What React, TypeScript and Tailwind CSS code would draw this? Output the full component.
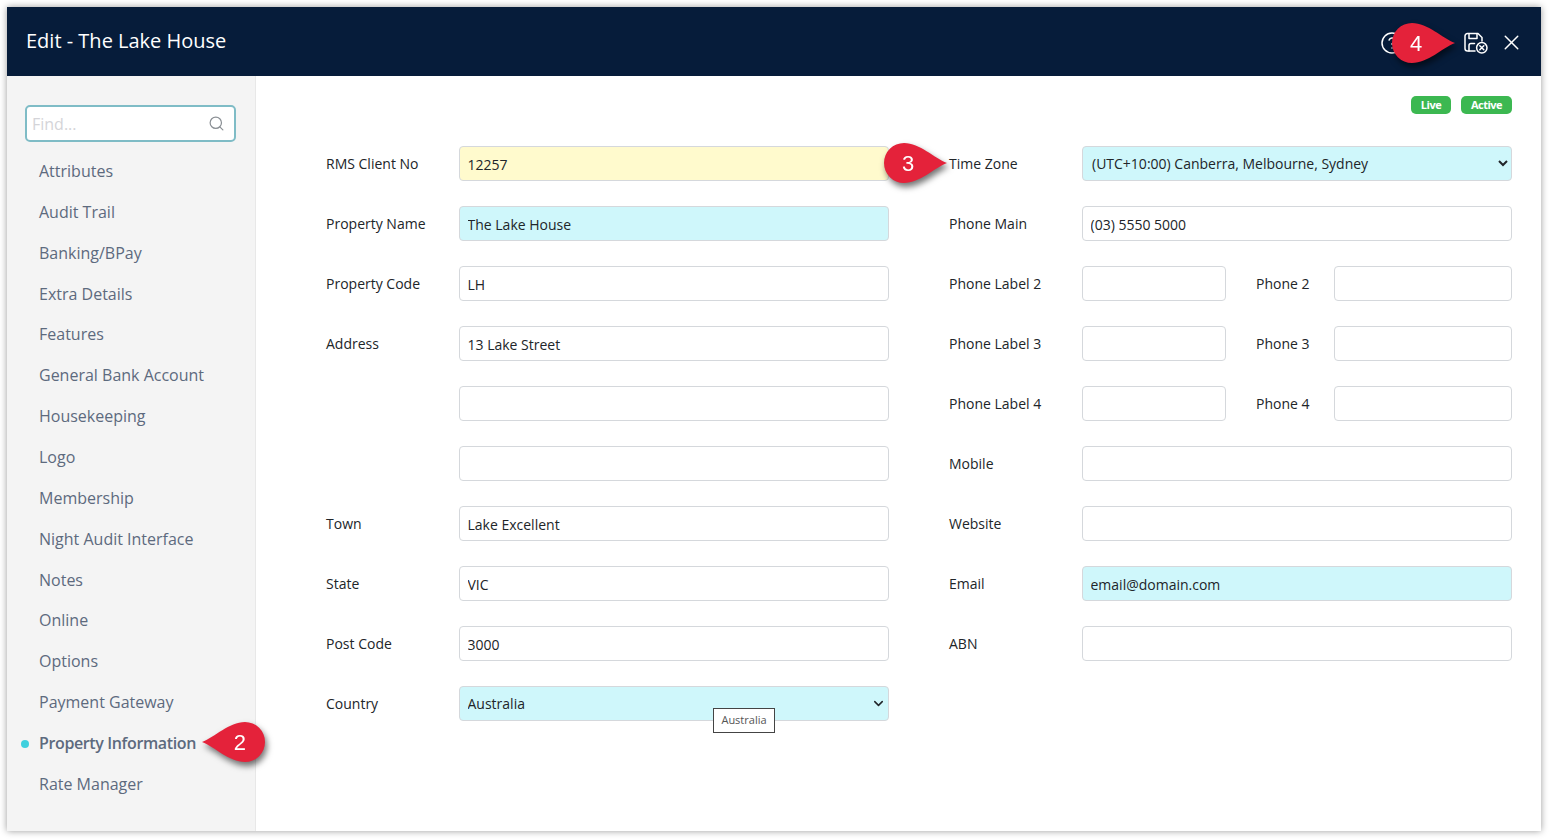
import { ChevronDown, HelpCircle, Search, X } from 'lucide-react'

const menu = [
  'Attributes',
  'Audit Trail',
  'Banking/BPay',
  'Extra Details',
  'Features',
  'General Bank Account',
  'Housekeeping',
  'Logo',
  'Membership',
  'Night Audit Interface',
  'Notes',
  'Online',
  'Options',
  'Payment Gateway',
  'Property Information',
  'Rate Manager',
]

const inputClass =
  'h-[35px] w-full rounded-[4px] border border-[#d5d8dc] text-[14px] text-[#212529] outline-none'

function Field({ value = '', tone = 'bg-white' }: { value?: string; tone?: string }) {
  return <input readOnly value={value} className={`${inputClass} px-[7.5px] pt-[2px] ${tone}`} />
}

function Label({ children }: { children?: string }) {
  return <div className="text-[14px] leading-[35px] text-[#212529]">{children}</div>
}

function PhoneRow({ n }: { n: number }) {
  return (
    <>
      <Label>{`Phone Label ${n}`}</Label>
      <div className="grid grid-cols-[144px_30px_78px_178px] items-center">
        <Field />
        <div />
        <Label>{`Phone ${n}`}</Label>
        <Field />
      </div>
    </>
  )
}

function Callout({ label, flip, className }: { label: string; flip?: boolean; className: string }) {
  return (
    <div className={`absolute h-[40px] w-[64px] drop-shadow-[2px_4px_3px_rgba(0,0,0,0.55)] ${className}`}>
      <svg width="64" height="40" viewBox="0 0 64 40" className={flip ? '-scale-x-100' : ''}>
        <path d="M63 20C50 25 36 40 20 40A20 20 0 0 1 20 0C36 0 50 15 63 20Z" fill="#e4223a" />
      </svg>
      <span
        className={`absolute top-[1px] text-[22px] leading-[40px] text-white ${flip ? 'right-[19px]' : 'left-[18px]'}`}
        style={{ fontFamily: '"Liberation Sans", sans-serif' }}
      >
        {label}
      </span>
    </div>
  )
}

function SaveCloseIcon() {
  return (
    <svg width="26" height="24" viewBox="0 0 26 24" fill="none" stroke="white" strokeWidth="1.5" strokeLinecap="round" strokeLinejoin="round">
      <path d="M12 20H4.5A2.5 2.5 0 0 1 2 17.500V5A2.500 2.500 0 0 1 4.500 2.500H15L19 6.500V10" />
      <path d="M6 3V7.500H14V3" />
      <path d="M11.500 12.500H8A2 2 0 0 0 6 14.500V20" />
      <circle cx="18.800" cy="16.800" r="5.200" />
      <path d="M16.800 14.800L20.800 18.800M20.800 14.800L16.800 18.800" />
    </svg>
  )
}

export default function App() {
  return (
    <div
      className="relative h-[839px] w-[1549px] overflow-hidden bg-white pb-[8px] pl-[7px] pr-[8px] pt-[7px]"
      style={{ fontFamily: '"Open Sans", sans-serif' }}
    >
      <div className="flex h-full flex-col shadow-[0_0_7px_rgba(0,0,0,0.4)]">
        {/* Header */}
        <div className="flex h-[69px] items-center justify-between bg-[#061c3a] pl-[19px] pr-[17px] text-white">
          <div className="pb-[2px] text-[20px]">Edit - The Lake House</div>
          <div className="flex items-center pt-[2px]">
            <HelpCircle className="mr-[59px] h-[24px] w-[24px]" strokeWidth={1.5} />
            <SaveCloseIcon />
            <X className="ml-[10px] h-[25px] w-[25px]" strokeWidth={1.4} />
          </div>
        </div>

        <div className="flex min-h-0 flex-1">
          {/* Sidebar */}
          <div className="w-[249px] shrink-0 border-r border-[#e8e8e8] bg-[#f4f4f4] pl-[18px] pr-[19px] pt-[29px]">
            <div className="flex h-[37px] w-[211px] items-center justify-between rounded-[5px] border-2 border-[#7fbcc6] bg-white pl-[5px] pr-[9px]">
              <span className="text-[16px] text-[#d4d4d8]">Find...</span>
              <Search className="h-[17px] w-[17px] text-[#8a8f94]" strokeWidth={1.7} />
            </div>
            <div className="mt-[9px]">
              {menu.map((item) => {
                const active = item === 'Property Information'
                return (
                  <div
                    key={item}
                    className={`relative h-[40.87px] pl-[14px] text-[16px] leading-[40.87px] text-[#5d6a7e] ${active ? 'font-semibold tracking-[-0.37px]' : ''}`}
                  >
                    {active && <span className="absolute left-[-4px] top-[17px] h-[8px] w-[8px] rounded-full bg-[#3fd0de]" />}
                    {item}
                  </div>
                )
              })}
            </div>
          </div>

          {/* Form */}
          <div className="flex-1 pl-[70px] pr-[29px] pt-[20px]">
            <div className="flex h-[18px] justify-end gap-[10px]">
              <span className="flex w-[40px] items-center justify-center rounded-[5px] bg-[#3cb851] text-[11px] font-bold tracking-[-0.5px] text-white">Live</span>
              <span className="flex w-[51px] items-center justify-center rounded-[5px] bg-[#3cb851] text-[11px] font-bold tracking-[-0.5px] text-white">Active</span>
            </div>
            <div className="mt-[32px] grid grid-cols-[133px_430px_60px_133px_430px] gap-y-[25px]">
              <Label>RMS Client No</Label>
              <Field value="12257" tone="bg-[#fffacd]" />
              <div />
              <Label>Time Zone</Label>
              <select className={`${inputClass} bg-[#cff7fb] pl-[5px]`} defaultValue="syd">
                <option value="syd">(UTC+10:00) Canberra, Melbourne, Sydney</option>
              </select>

              <Label>Property Name</Label>
              <Field value="The Lake House" tone="bg-[#cff7fb]" />
              <div />
              <Label>Phone Main</Label>
              <Field value="(03) 5550 5000" />

              <Label>Property Code</Label>
              <Field value="LH" />
              <div />
              <PhoneRow n={2} />

              <Label>Address</Label>
              <Field value="13 Lake Street" />
              <div />
              <PhoneRow n={3} />

              <Label />
              <Field />
              <div />
              <PhoneRow n={4} />

              <Label />
              <Field />
              <div />
              <Label>Mobile</Label>
              <Field />

              <Label>Town</Label>
              <Field value="Lake Excellent" />
              <div />
              <Label>Website</Label>
              <Field />

              <Label>State</Label>
              <Field value="VIC" />
              <div />
              <Label>Email</Label>
              <Field value="email@domain.com" tone="bg-[#cff7fb]" />

              <Label>Post Code</Label>
              <Field value="3000" />
              <div />
              <Label>ABN</Label>
              <Field />

              <Label>Country</Label>
              <div className="relative">
                <select className={`${inputClass} appearance-none bg-[#cff7fb] pl-[7.5px]`} defaultValue="au">
                  <option value="au">Australia</option>
                </select>
                <ChevronDown className="absolute right-[3px] top-[10px] h-[15px] w-[15px] text-[#212529]" strokeWidth={2.4} />
              </div>
            </div>
          </div>
        </div>
      </div>

      {/* Tooltip over the country select */}
      <div className="absolute left-[713px] top-[708px] flex h-[25px] w-[62px] items-center justify-center border border-[#444] bg-white text-[11px] text-[#555]">
        Australia
      </div>

      {/* Numbered callouts */}
      <Callout label="2" flip className="left-[201px] top-[722px]" />
      <Callout label="3" className="left-[884px] top-[143px]" />
      <Callout label="4" className="left-[1392px] top-[23px]" />
    </div>
  )
}
